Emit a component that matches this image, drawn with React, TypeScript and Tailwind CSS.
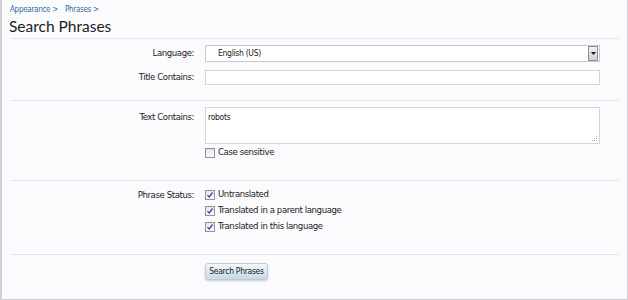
import React from 'react';

const font = { fontFamily: '"DejaVu Sans Condensed", "Liberation Sans Narrow", sans-serif' };

const Check: React.FC<{ checked?: boolean; label: string }> = ({ checked, label }) => (
    <label className="flex items-center gap-[3px] h-[15px] text-[9.5px] tracking-[-0.4px] text-[#222] whitespace-nowrap">
        <span className="w-[10px] h-[10px] border border-[#8f8f9d] bg-gradient-to-b from-[#e6e6ec] to-[#fdfdff] flex items-center justify-center">
            {checked && (
                <svg width="8" height="8" viewBox="0 0 8 8">
                    <path d="M1.5 4.2 L3.2 6 L6.6 1.5" fill="none" stroke="#3d4a8a" strokeWidth="1.3" />
                </svg>
            )}
        </span>
        {label}
    </label>
);

const Label: React.FC<{ children: React.ReactNode }> = ({ children }) => (
    <div className="w-[192px] shrink-0 text-right text-[9.5px] tracking-[-0.4px] text-[#222] whitespace-nowrap">{children}</div>
);

export default function App() {
    return (
        <div className="w-[628px] h-[300px] bg-[#fbfbfe] border-l-2 border-r border-b border-[#cfcfd6] overflow-hidden" style={font}>
            <div className="pl-[8px] pt-[4px] h-[16px] flex gap-[7px] text-[8px] tracking-[-0.3px] text-[#2f6ca3] whitespace-nowrap">
                <span>Appearance &gt;</span>
                <span>Phrases &gt;</span>
            </div>
            <h1 className="pl-[7px] text-[15.5px] leading-[21px] text-[#1c1c1c]" style={{ fontFamily: 'Lato, "Open Sans", sans-serif' }}>
                Search Phrases
            </h1>
            <div className="mx-[8px] mt-[1px] border-t border-[#e4e6ee]" />

            <div className="pt-[6px]">
                <div className="flex items-center h-[17px]">
                    <Label>Language:</Label>
                    <div className="ml-[11px] w-[395px] h-[17px] border border-[#c8c8d0] bg-white flex items-center justify-between">
                        <span className="pl-[12px] text-[8.5px] tracking-[-0.3px] text-[#222]">English (US)</span>
                        <span className="w-[10px] h-[15px] mr-[1px] border border-[#8e8e98] bg-gradient-to-b from-[#f2f2f4] to-[#cfd0d6] flex items-center justify-center">
                            <svg width="5" height="3" viewBox="0 0 5 3"><path d="M0 0 H5 L2.5 3 Z" fill="#111" /></svg>
                        </span>
                    </div>
                </div>
                <div className="flex items-center h-[15px] mt-[8px]">
                    <Label>Title Contains:</Label>
                    <div className="ml-[11px] w-[395px] h-[15px] border border-[#d4d4dc] bg-white" />
                </div>
            </div>
            <div className="mx-[8px] mt-[15px] border-t border-[#e4e6ee]" />

            <div className="pt-[6px]">
                <div className="flex">
                    <Label><div className="pt-[3px]">Text Contains:</div></Label>
                    <div className="ml-[11px] w-[395px] h-[37px] border border-[#d4d4dc] bg-white relative">
                        <span className="absolute left-[2px] top-[3px] text-[8.5px] tracking-[-0.3px] text-[#222]">robots</span>
                        <svg className="absolute right-[1px] bottom-[1px]" width="7" height="7" viewBox="0 0 7 7">
                            <rect x="5" y="1" width="1" height="1" fill="#aaa" />
                            <rect x="3" y="3" width="1" height="1" fill="#aaa" />
                            <rect x="5" y="3" width="1" height="1" fill="#aaa" />
                            <rect x="1" y="5" width="1" height="1" fill="#aaa" />
                            <rect x="3" y="5" width="1" height="1" fill="#aaa" />
                            <rect x="5" y="5" width="1" height="1" fill="#aaa" />
                        </svg>
                    </div>
                </div>
                <div className="flex mt-[1px]">
                    <div className="w-[203px] shrink-0" />
                    <Check label="Case sensitive" />
                </div>
            </div>
            <div className="mx-[8px] mt-[20px] border-t border-[#e4e6ee]" />

            <div className="pt-[6px] flex">
                <Label><div className="pt-[1px]">Phrase Status:</div></Label>
                <div className="ml-[11px] flex flex-col gap-[1px]">
                    <Check checked label="Untranslated" />
                    <Check checked label="Translated in a parent language" />
                    <Check checked label="Translated in this language" />
                </div>
            </div>
            <div className="mx-[8px] mt-[20px] border-t border-[#dbe8ec]" />

            <div className="flex pt-[8px]">
                <div className="w-[203px] shrink-0" />
                <button className="w-[63px] h-[17px] rounded-[3px] border border-[#b9cbd9] bg-gradient-to-b from-[#f4f8fb] to-[#c6dae8] text-[8.5px] tracking-[-0.3px] text-[#222] whitespace-nowrap shadow-[0_1px_2px_rgba(0,0,0,0.2)]">
                    Search Phrases
                </button>
            </div>
        </div>
    );
}
